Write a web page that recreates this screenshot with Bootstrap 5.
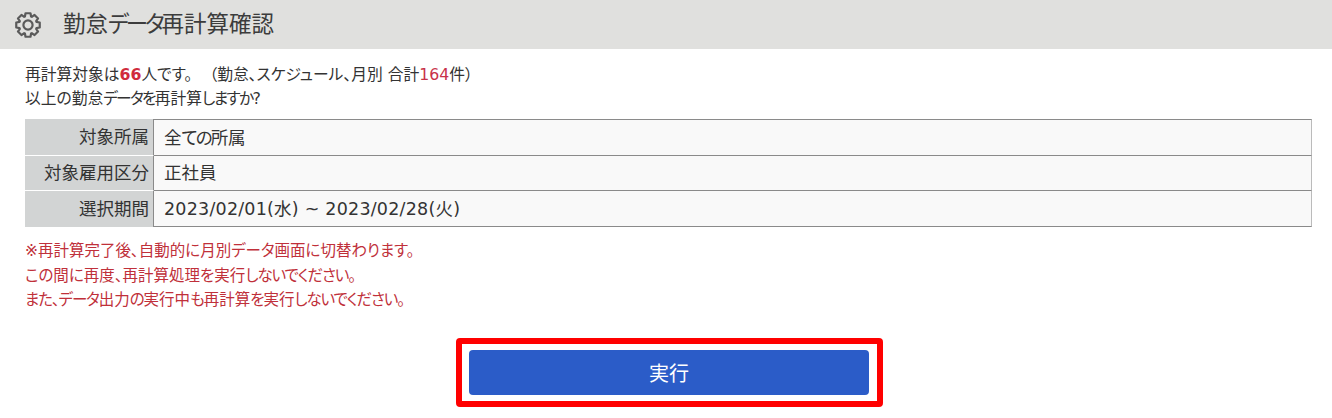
<!DOCTYPE html>
<html lang="ja">
<head>
<meta charset="utf-8">
<title>勤怠データ再計算確認</title>
<link rel="stylesheet" href="https://cdn.jsdelivr.net/npm/bootstrap@5.3.0/dist/css/bootstrap.min.css">
<style>
html,body{height:418px;overflow:hidden}
body{font-family:"DejaVu Sans","Noto Sans CJK JP",sans-serif;color:#333;background:#fff;font-size:15.75px;font-feature-settings:"palt"}
.head-bar{height:49px;background:#e0e0de;padding-left:15px;gap:22px;font-size:22.5px;color:#3c3c3c}
.page-body{padding:14px 20px 0 25px}
.intro-line{line-height:24px;height:24px;margin:0}
.num-strong{color:#d02b3c;font-weight:700}
.num-plain{color:#c8324a}
.kn{letter-spacing:-.11em}
.kn-title{letter-spacing:-.14em}
.kn-soft{letter-spacing:-.07em}
.paren-gap{margin-left:12px}
.date-text{letter-spacing:.22px}
.info-tbl{margin-top:8px;width:1287px;border-collapse:separate;border-spacing:0;font-size:17.5px}
.info-tbl th{width:129px;background:#d2d4d4;font-weight:400;text-align:right;padding:1px 4px 0 0;border-bottom:1px solid #fff;border-right:1px solid #8a8a8a}
.info-tbl td{background:#f9f9f9;padding:1px 0 0 10px;border-bottom:1px solid #8a8a8a;border-right:1px solid #bbb}
.info-tbl tr:nth-child(1) th,.info-tbl tr:nth-child(1) td{height:37px}
.info-tbl tr:nth-child(2) th,.info-tbl tr:nth-child(2) td{height:35px}
.info-tbl tr:nth-child(3) th,.info-tbl tr:nth-child(3) td{height:36px}
.info-tbl tr:first-child td{border-top:1px solid #8a8a8a}
.info-tbl tr:last-child th{border-bottom:0}
.warn-box{margin-top:12px;color:#c0303a;font-size:15.5px}
.warn-box p{margin:0;line-height:24.5px;height:24.5px}
.red-frame{width:427px;height:69px;border:6px solid #f00;border-radius:4px;padding:6px 7px;margin:25px 0 0 431px;background:#fff}
.run-btn{width:400px;height:45px;background:#2b5cc8;border:0;color:#fff;font-size:20px;border-radius:4px;padding:3px 0 0;--bs-btn-hover-bg:#2b5cc8;--bs-btn-hover-color:#fff}
</style>
</head>
<body>
<div class="head-bar d-flex align-items-center">
  <svg width="26" height="26" viewBox="-13 -13 26 26" fill="none" stroke="#5a5a5a" stroke-width="2.2" stroke-linejoin="round" aria-hidden="true">
    <polygon points="-2.49,-11.74 2.49,-11.74 3.08,-8.46 3.8,-8.16 6.54,-10.06 10.06,-6.54 8.16,-3.8 8.46,-3.08 11.74,-2.49 11.74,2.49 8.46,3.08 8.16,3.8 10.06,6.54 6.54,10.06 3.8,8.16 3.08,8.46 2.49,11.74 -2.49,11.74 -3.08,8.46 -3.8,8.16 -6.54,10.06 -10.06,6.54 -8.16,3.8 -8.46,3.08 -11.74,2.49 -11.74,-2.49 -8.46,-3.08 -8.16,-3.8 -10.06,-6.54 -6.54,-10.06 -3.8,-8.16 -3.08,-8.46"/>
    <circle r="4.6"/>
  </svg>
  <span>勤怠<span class="kn-title">データ</span>再計算確認</span>
</div>
<div class="page-body">
  <p class="intro-line">再計算対象は<span class="num-strong">66</span>人です。<span class="paren-gap">&nbsp;</span>（勤怠、スケジュール、月別 合計<span class="num-plain">164</span>件）</p>
  <p class="intro-line">以上の勤怠<span class="kn">データを</span>再計算<span class="kn">しますか</span>?</p>
  <table class="info-tbl">
    <tbody>
      <tr><th>対象所属</th><td>全<span class="kn">ての</span>所属</td></tr>
      <tr><th>対象雇用区分</th><td>正社員</td></tr>
      <tr><th>選択期間</th><td class="date-text">2023/02/01(水) ~ 2023/02/28(火)</td></tr>
    </tbody>
  </table>
  <div class="warn-box">
    <p>※再計算完了後、自動的に月別データ画面に切替わります。</p>
    <p>この間に再度、再計算処理を実行<span class="kn-soft">しないでください。</span></p>
    <p><span class="kn-soft">また、データ</span>出力<span class="kn-soft">の</span>実行中<span class="kn-soft">も</span>再計算<span class="kn-soft">を</span>実行<span class="kn-soft">しないでください。</span></p>
  </div>
  <div class="red-frame">
    <button type="button" class="btn run-btn">実行</button>
  </div>
</div>
<script src="https://cdn.jsdelivr.net/npm/bootstrap@5.3.0/dist/js/bootstrap.bundle.min.js"></script>
</body>
</html>
